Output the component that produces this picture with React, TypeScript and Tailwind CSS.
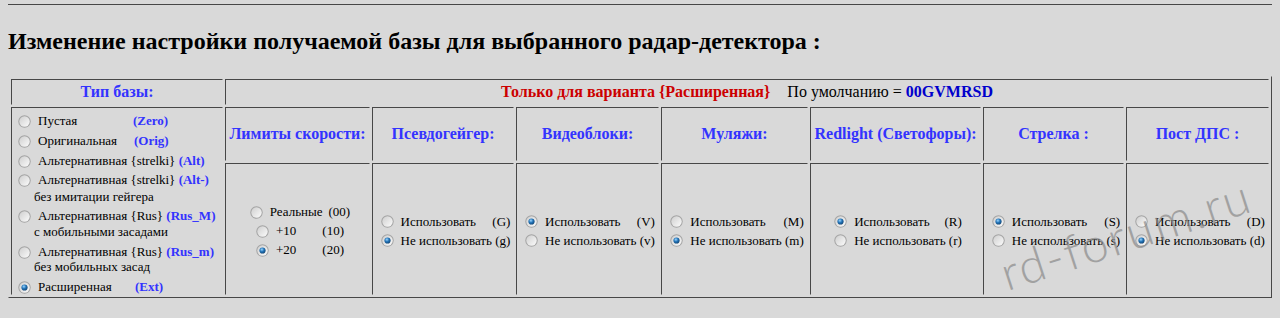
import { useId } from "react";

const dark = "#474747";

function Radio({ on }: { on?: boolean }) {
  const id = useId().replace(/[^a-zA-Z0-9]/g, "");
  return (
    <svg width="13" height="13" viewBox="0 0 13 13" className="shrink-0 ml-[5px] mr-[7px]">
      <defs>
        <linearGradient id={id + "g"} x1="0" y1="0" x2="1" y2="1">
          <stop offset="0" stopColor="#cfcfcf" />
          <stop offset="1" stopColor="#fbfbfb" />
        </linearGradient>
        <radialGradient id={id + "d"} cx="0.4" cy="0.35" r="0.75">
          <stop offset="0" stopColor="#9bd6ff" />
          <stop offset="0.45" stopColor="#2374b8" />
          <stop offset="1" stopColor="#0c3a66" />
        </radialGradient>
      </defs>
      <circle cx="6.5" cy="6.5" r="6.2" fill="#a4a4a4" />
      <circle cx="6.5" cy="6.5" r="5.2" fill={`url(#${id}g)`} />
      {on && <circle cx="6.5" cy="6.5" r="3.1" fill={`url(#${id}d)`} />}
    </svg>
  );
}

const cell = "border border-[#d9d9d9] border-t-[#474747] border-l-[#474747]";

// use: true -> отмечено "Использовать"
const columns = [
  { title: "Псевдогейгер:", a: "(G)", b: "(g)", use: false },
  { title: "Видеоблоки:", a: "(V)", b: "(v)", use: true },
  { title: "Муляжи:", a: "(M)", b: "(m)", use: false },
  { title: "Redlight (Светофоры):", a: "(R)", b: "(r)", use: true },
  { title: "Стрелка :", a: "(S)", b: "(s)", use: true },
  { title: "Пост ДПС :", a: "(D)", b: "(d)", use: false },
];

function BaseList() {
  return (
    <div className="flex flex-col pt-[5px] pl-[1px] text-[13px] text-black">
      <div className="flex items-center h-[16px]">
        <Radio />
        <span className="w-[95px]">Пустая</span>
        <b className="text-[#3333ff]">(Zero)</b>
      </div>
      <div className="flex items-center h-[16px] mt-[4px]">
        <Radio />
        <span className="w-[96px]">Оригинальная</span>
        <b className="text-[#3333ff]">(Orig)</b>
      </div>
      <div className="flex items-center h-[16px] mt-[4px] whitespace-pre">
        <Radio />
        <span>Альтернативная {"{strelki}"} </span>
        <b className="text-[#3333ff]">(Alt)</b>
      </div>
      <div className="flex items-center h-[16px] mt-[3px] whitespace-pre">
        <Radio />
        <span>Альтернативная {"{strelki}"} </span>
        <b className="text-[#3333ff]">(Alt-)</b>
      </div>
      <div className="h-[16px] leading-[16px] mt-[1px] pl-[21px]">без имитации гейгера</div>
      <div className="flex items-center h-[16px] mt-[3px] whitespace-pre">
        <Radio />
        <span>Альтернативная {"{Rus}"} </span>
        <b className="text-[#3333ff]">(Rus_M)</b>
      </div>
      <div className="h-[16px] leading-[16px] pl-[21px]">с мобильными засадами</div>
      <div className="flex items-center h-[16px] mt-[4px] whitespace-pre">
        <Radio />
        <span>Альтернативная {"{Rus}"} </span>
        <b className="text-[#3333ff]">(Rus_m)</b>
      </div>
      <div className="h-[16px] leading-[16px] mt-[-1px] pl-[21px]">без мобильных засад</div>
      <div className="flex items-center h-[16px] mt-[4px]">
        <Radio on />
        <span className="w-[97px]">Расширенная</span>
        <b className="text-[#3333ff]">(Ext)</b>
      </div>
    </div>
  );
}

export default function App() {
  return (
    <div className="min-h-[318px] bg-[#d9d9d9] px-2 pt-[4px] font-['Liberation_Serif','Times_New_Roman',serif] text-black">
      <div className="border-t border-b border-t-[#474747] border-b-[#d9d9d9]" />

      <h2 className="mt-[21px] mb-[21px] text-[24px] leading-[28px] font-bold">
        Изменение настройки получаемой базы для выбранного радар-детектора :
      </h2>

      <div
        className="relative grid gap-[2px] p-[2px] border border-[#d9d9d9] border-r-[#474747] border-b-[#474747]"
        style={{
          gridTemplateColumns: "212px 145px 142px 143px 147px 171px 141px 143px",
          gridTemplateRows: "26px 54px 132px",
          borderRightColor: dark,
          borderBottomColor: dark,
        }}
      >
        <div className={`${cell} flex items-center justify-center text-[16px] font-bold text-[#3333ff]`}>
          Тип базы:
        </div>
        <div className={`${cell} col-span-7 flex items-center justify-center text-[16px]`}>
          <b className="text-[#cc0000]">Только для варианта {"{Расширенная}"}</b>
          <span className="ml-[17px]">По умолчанию = </span>
          <b className="ml-[4px] text-[#0000cc]">00GVMRSD</b>
        </div>

        <div className={`${cell} row-span-2`}>
          <BaseList />
        </div>

        <div className={`${cell} flex items-center justify-center text-center text-[16px] font-bold text-[#3333ff]`}>
          Лимиты скорости:
        </div>
        {columns.map((c) => (
          <div
            key={c.title}
            className={`${cell} flex items-center justify-center text-center text-[16px] font-bold text-[#3333ff]`}
          >
            {c.title}
          </div>
        ))}

        <div className={`${cell} flex flex-col items-center justify-center pt-[4px] text-[13px]`}>
          <div className="flex items-center h-[19px]">
            <Radio />
            <span>Реальные</span>
            <span className="ml-[6px]">(00)</span>
          </div>
          <div className="flex items-center h-[19px]">
            <Radio />
            <span>+10</span>
            <span className="ml-[26px]">(10)</span>
          </div>
          <div className="flex items-center h-[19px]">
            <Radio on />
            <span>+20</span>
            <span className="ml-[26px]">(20)</span>
          </div>
        </div>
        {columns.map((c) => (
          <div key={c.title + "-o"} className={`${cell} flex items-center justify-center pt-[4px] text-[13px]`}>
            <div className="inline-flex flex-col">
              <div className="flex items-center h-[19px]">
                <Radio on={c.use} />
                <span>Использовать</span>
                <span className="ml-auto">{c.a}</span>
              </div>
              <div className="flex items-center h-[19px] whitespace-pre">
                <Radio on={!c.use} />
                <span>Не использовать {c.b}</span>
              </div>
            </div>
          </div>
        ))}

        <span className="pointer-events-none absolute left-[1000px] top-[172px] origin-bottom-left -rotate-[18deg] whitespace-nowrap font-['Lato','DejaVu_Sans',sans-serif] text-[48px] font-light leading-[48px] tracking-[2px] text-[#8a8a8a] opacity-70">
          rd-forum.ru
        </span>
      </div>
    </div>
  );
}
